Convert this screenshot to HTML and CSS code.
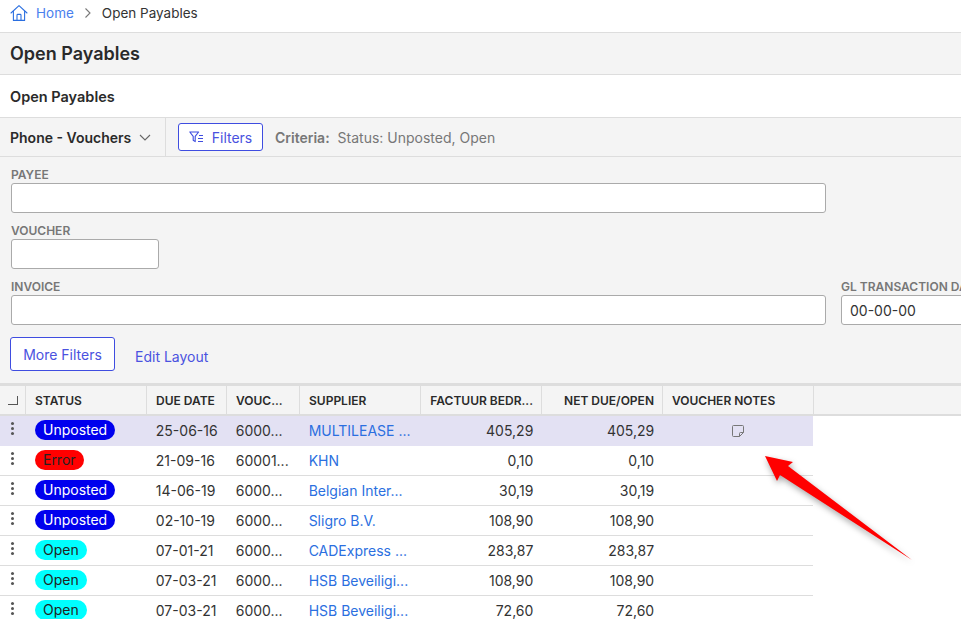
FILE: index.html
```html
<!DOCTYPE html>
<html lang="en">
<head>
    <meta charset="UTF-8">
    <title>Open Payables</title>
    <link rel="stylesheet" href="styles.css">
</head>
<body>
    <!-- Breadcrumb -->
    <nav class="breadcrumb">
        <svg class="home-icon" width="18" height="18" viewBox="0 0 18 18" fill="none" stroke="#2b6fe0" stroke-width="1.1" stroke-linejoin="round" stroke-linecap="round">
            <path d="M1 9 9 1.6 17 9"/>
            <path d="M3.4 7.4V16.4H14.6V7.4"/>
            <path d="M7 16.4V11.2Q7 10.4 7.8 10.4H10.2Q11 10.4 11 11.2V16.4"/>
        </svg>
        <a class="crumb-link">Home</a>
        <svg class="crumb-sep" width="8" height="12" viewBox="0 0 8 12" fill="none" stroke="#777" stroke-width="1.1"><path d="M1.5 1.5 6 6 1.5 10.5"/></svg>
        <span>Open Payables</span>
    </nav>

    <header class="page-title"><h1>Open Payables</h1></header>
    <div class="sub-title"><h2>Open Payables</h2></div>

    <!-- Toolbar -->
    <div class="toolbar">
        <div class="view-select">
            <span>Phone - Vouchers</span>
            <svg width="12" height="7" viewBox="0 0 12 7" fill="none" stroke="#666" stroke-width="1.1"><path d="M1 1 6 6 11 1"/></svg>
        </div>
        <button class="btn btn-filter">
            <svg width="15" height="12" viewBox="0 0 15 12" fill="none" stroke="#3f4de0" stroke-width="1.1" stroke-linejoin="round"><path d="M.8 1H9.6L6.2 5.4V10.6L4.2 9.2V5.4Z"/><path d="M10 4.5H14M9 7.5H14M9 10.5H14"/></svg>
            Filters
        </button>
        <div class="criteria"><b>Criteria:</b> Status: Unposted, Open</div>
    </div>

    <!-- Filters -->
    <section class="filters">
        <div class="field">
            <label>PAYEE</label>
            <input class="input input-wide" type="text">
        </div>
        <div class="field">
            <label>VOUCHER</label>
            <input class="input input-small" type="text">
        </div>
        <div class="field-row">
            <div class="field">
                <label>INVOICE</label>
                <input class="input input-wide" type="text">
            </div>
            <div class="field">
                <label>GL TRANSACTION DATE</label>
                <input class="input input-date" type="text" value="00-00-00">
            </div>
        </div>
        <div class="filter-actions">
            <button class="btn btn-more">More Filters</button>
            <a class="edit-layout">Edit Layout</a>
        </div>
    </section>

    <!-- Table -->
    <div class="grid">
        <div class="row head">
            <div class="cell c-menu"><span class="corner"></span></div>
            <div class="cell c-status">STATUS</div>
            <div class="cell c-due">DUE DATE</div>
            <div class="cell c-vouc">VOUC...</div>
            <div class="cell c-supp">SUPPLIER</div>
            <div class="cell c-amt">FACTUUR BEDR...</div>
            <div class="cell c-amt">NET DUE/OPEN</div>
            <div class="cell c-notes">VOUCHER NOTES</div>
        </div>
        <div class="row selected">
            <div class="cell c-menu"><i class="dots"></i></div>
            <div class="cell c-status"><span class="pill unposted">Unposted</span></div>
            <div class="cell c-due">25-06-16</div>
            <div class="cell c-vouc">6000...</div>
            <div class="cell c-supp"><a>MULTILEASE ...</a></div>
            <div class="cell c-amt">405,29</div>
            <div class="cell c-amt">405,29</div>
            <div class="cell c-notes note-cell">
                <svg width="14" height="14" viewBox="0 0 14 14" fill="none" stroke="#777" stroke-width="1"><path d="M2.5 1.5H11.5Q12.5 1.5 12.5 2.5V8.5L8.5 12.5H2.5Q1.5 12.5 1.5 11.5V2.5Q1.5 1.5 2.5 1.5Z"/><path d="M8.5 12.5V9.5Q8.5 8.5 9.5 8.5H12.5"/></svg>
            </div>
        </div>
        <div class="row">
            <div class="cell c-menu"><i class="dots"></i></div>
            <div class="cell c-status"><span class="pill error">Error</span></div>
            <div class="cell c-due">21-09-16</div>
            <div class="cell c-vouc">60001...</div>
            <div class="cell c-supp"><a>KHN</a></div>
            <div class="cell c-amt">0,10</div>
            <div class="cell c-amt">0,10</div>
            <div class="cell c-notes"></div>
        </div>
        <div class="row">
            <div class="cell c-menu"><i class="dots"></i></div>
            <div class="cell c-status"><span class="pill unposted">Unposted</span></div>
            <div class="cell c-due">14-06-19</div>
            <div class="cell c-vouc">6000...</div>
            <div class="cell c-supp"><a>Belgian Inter...</a></div>
            <div class="cell c-amt">30,19</div>
            <div class="cell c-amt">30,19</div>
            <div class="cell c-notes"></div>
        </div>
        <div class="row">
            <div class="cell c-menu"><i class="dots"></i></div>
            <div class="cell c-status"><span class="pill unposted">Unposted</span></div>
            <div class="cell c-due">02-10-19</div>
            <div class="cell c-vouc">6000...</div>
            <div class="cell c-supp"><a>Sligro B.V.</a></div>
            <div class="cell c-amt">108,90</div>
            <div class="cell c-amt">108,90</div>
            <div class="cell c-notes"></div>
        </div>
        <div class="row">
            <div class="cell c-menu"><i class="dots"></i></div>
            <div class="cell c-status"><span class="pill open">Open</span></div>
            <div class="cell c-due">07-01-21</div>
            <div class="cell c-vouc">6000...</div>
            <div class="cell c-supp"><a>CADExpress ...</a></div>
            <div class="cell c-amt">283,87</div>
            <div class="cell c-amt">283,87</div>
            <div class="cell c-notes"></div>
        </div>
        <div class="row">
            <div class="cell c-menu"><i class="dots"></i></div>
            <div class="cell c-status"><span class="pill open">Open</span></div>
            <div class="cell c-due">07-03-21</div>
            <div class="cell c-vouc">6000...</div>
            <div class="cell c-supp"><a>HSB Beveiligi...</a></div>
            <div class="cell c-amt">108,90</div>
            <div class="cell c-amt">108,90</div>
            <div class="cell c-notes"></div>
        </div>
        <div class="row">
            <div class="cell c-menu"><i class="dots"></i></div>
            <div class="cell c-status"><span class="pill open">Open</span></div>
            <div class="cell c-due">07-03-21</div>
            <div class="cell c-vouc">6000...</div>
            <div class="cell c-supp"><a>HSB Beveiligi...</a></div>
            <div class="cell c-amt">72,60</div>
            <div class="cell c-amt">72,60</div>
            <div class="cell c-notes"></div>
        </div>
    </div>

    <!-- Annotation arrow on top of the screenshot -->
    <svg class="arrow" width="961" height="619" viewBox="0 0 961 619">
        <path d="M765 456 793 462 788 466 912 560 780 475 777 481Z" fill="#ff0000"/>
    </svg>
</body>
</html>
```

FILE: styles.css
```css
html, body {
    height: 619px;
    overflow: hidden;
}

body {
    margin: 0;
    font-family: 'Inter', sans-serif;
    font-size: 14px;
    color: #333;
    background-color: #fff;
}

* {
    box-sizing: border-box;
}

a {
    color: #2b6fe0;
}

.breadcrumb {
    height: 33px;
    display: flex;
    align-items: center;
    padding: 0 0 6px 10px;
    border-bottom: 1px solid #ddd;
    font-size: 13.5px;
}

.home-icon {
    margin-right: 8px;
}

.crumb-link {
    color: #4a80ee;
}

.crumb-sep {
    margin: 0 10px;
}

.page-title {
    height: 42px;
    display: flex;
    align-items: center;
    padding-left: 10px;
    background-color: #f4f4f4;
    border-bottom: 1px solid #ddd;
}

h1 {
    margin: 0;
    font-size: 18px;
    font-weight: 600;
    color: #2a2a2a;
}

.sub-title {
    height: 43px;
    display: flex;
    align-items: center;
    padding-left: 10px;
    border-bottom: 1px solid #ddd;
}

h2 {
    margin: 0;
    font-size: 14.5px;
    font-weight: 600;
    color: #2a2a2a;
}

.toolbar {
    height: 39px;
    display: flex;
    align-items: center;
    background-color: #f4f4f4;
    border-bottom: 1px solid #ddd;
}

.view-select {
    width: 166px;
    height: 100%;
    display: flex;
    align-items: center;
    gap: 8px;
    padding-left: 10px;
    font-weight: 600;
    font-size: 14px;
    color: #2a2a2a;
    border-right: 1px solid #ddd;
}

.btn {
    font-family: inherit;
    background-color: #fff;
    border: 1px solid #3f4de0;
    border-radius: 3px;
    color: #4a52e0;
    font-size: 14px;
}

.btn-filter {
    width: 85px;
    height: 28px;
    margin-left: 12px;
    display: flex;
    align-items: center;
    justify-content: center;
    gap: 8px;
    padding: 0;
}

.criteria {
    margin-left: 12px;
    color: #777;
    font-size: 14px;
}

.criteria b {
    font-weight: 600;
    margin-right: 4px;
}

.filters {
    height: 229px;
    padding: 10px 0 0 11px;
    background-color: #f4f4f4;
    border-bottom: 3px solid #ddd;
}

.field {
    margin-bottom: 10px;
}

.field-row {
    display: flex;
    gap: 15px;
    width: 1100px;
}

label {
    display: block;
    height: 16px;
    font-size: 12px;
    line-height: 16px;
    font-weight: 600;
    color: #777;
}

.input {
    display: block;
    height: 30px;
    margin-top: 0;
    padding: 0 8px;
    font-family: inherit;
    font-size: 14px;
    color: #333;
    background-color: #fff;
    border: 1px solid #aaa;
    border-radius: 3px;
}

.input-wide {
    width: 815px;
}

.input-small {
    width: 148px;
}

.input-date {
    width: 130px;
}

.filter-actions {
    display: flex;
    align-items: center;
    gap: 20px;
    margin-left: -1px;
    margin-top: 2px;
}

.btn-more {
    width: 105px;
    height: 34px;
    padding: 0;
}

.edit-layout {
    color: #4a52e0;
    font-size: 14px;
    padding-top: 4px;
}

.grid {
    width: 961px;
}

.row {
    display: flex;
    height: 30px;
    border-bottom: 1px solid #ddd;
    width: 813px;
}

.row.head {
    width: 961px;
    background-color: #f4f4f4;
    font-size: 12px;
    font-weight: 600;
    color: #2a2a2a;
    border-bottom-width: 2px;
}

.row.selected {
    background-color: #e3e1f3;
    border-bottom-color: #e3e1f3;
}

.cell {
    display: flex;
    align-items: center;
    padding: 0 9px;
    white-space: nowrap;
    overflow: hidden;
}

.head .cell {
    border-right: 1px solid #ddd;
}

.c-menu {
    width: 26px;
    padding: 0;
    justify-content: center;
}

.c-status {
    width: 121px;
}

.c-due {
    width: 80px;
}

.c-vouc {
    width: 73px;
}

.c-supp {
    width: 121px;
}

.c-amt {
    width: 121px;
    justify-content: flex-end;
    padding-right: 8px;
}

.c-notes {
    width: 151px;
}

.note-cell {
    justify-content: center;
}

.corner {
    width: 10px;
    height: 9px;
    border-right: 1px solid #555;
    border-bottom: 1px solid #555;
}

.dots {
    width: 3px;
    height: 3px;
    border-radius: 50%;
    background-color: #555;
    box-shadow: 0 -5px 0 #555, 0 5px 0 #555;
    margin-bottom: 4px;
}

.pill {
    height: 20px;
    line-height: 20px;
    padding: 0 8px;
    border-radius: 10px;
    font-size: 14px;
    margin-bottom: 1px;
}

.unposted {
    background-color: #0000ee;
    color: #fff;
}

.error {
    background-color: #ff0000;
    color: #222;
}

.open {
    background-color: #00ffff;
    color: #222;
}

.arrow {
    position: absolute;
    top: 0;
    left: 0;
    pointer-events: none;
    filter: drop-shadow(1px 3px 3px rgba(0, 0, 0, 0.35));
}
```
